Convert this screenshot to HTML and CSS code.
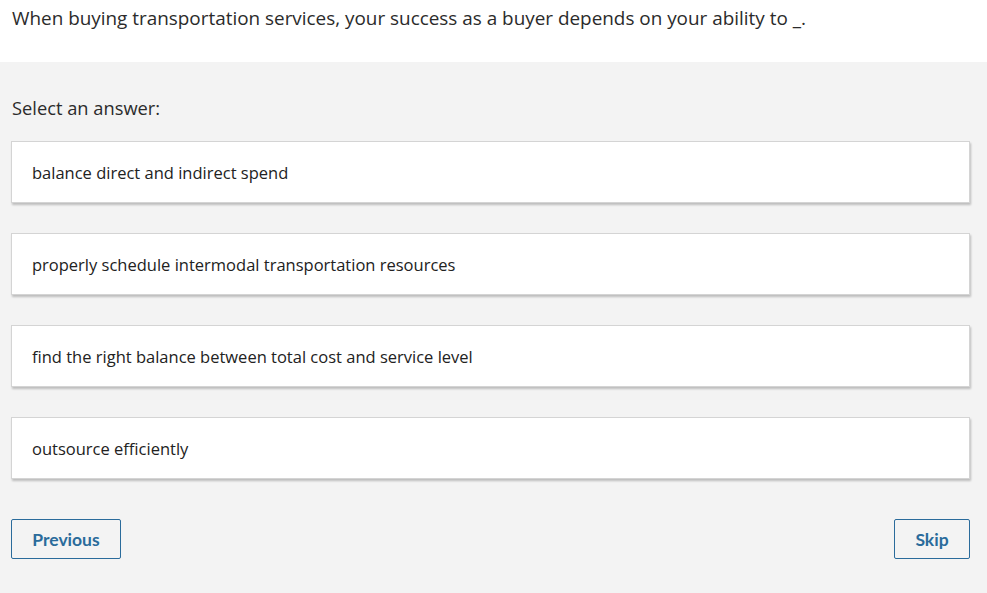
FILE: index.html
```html
<!DOCTYPE html>
<html>
<head>
<meta charset="utf-8">
<link rel="stylesheet" href="styles.css">
</head>
<body>
<div class="question">When buying transportation services, your success as a buyer depends on your ability to _.</div>
<div class="panel">
  <div class="prompt">Select an answer:</div>
  <div class="answers">
    <div class="answer">balance direct and indirect spend</div>
    <div class="answer">properly schedule intermodal transportation resources</div>
    <div class="answer">find the right balance between total cost and service level</div>
    <div class="answer">outsource efficiently</div>
  </div>
  <div class="nav">
    <button class="btn btn-prev">Previous</button>
    <button class="btn btn-skip">Skip</button>
  </div>
</div>
</body>
</html>
```
FILE: styles.css
```css
html, body {
  margin: 0;
  padding: 0;
  background: #f3f3f3;
}
body {
  font-family: "Open Sans", "Noto Sans", sans-serif;
  color: #222;
}
.question {
  background: #fff;
  height: 62px;
  box-sizing: border-box;
  padding: 3px 12px 0;
  font-size: 18.9px;
  line-height: 30px;
  color: #2b2b2b;
}
.panel {
  padding: 32px 17px 0 11px;
}
.prompt {
  font-size: 18.3px;
  line-height: 28px;
  color: #2b2b2b;
  padding-left: 1px;
  margin-bottom: 19px;
}
.answers {
  display: flex;
  flex-direction: column;
  gap: 30px;
}
.answer {
  background: #fff;
  border: 1px solid #d4d4d4;
  box-shadow: 1px 2px 2px rgba(0,0,0,0.22);
  height: 62px;
  box-sizing: border-box;
  padding: 0 20px;
  display: flex;
  align-items: center;
  font-size: 16.5px;
  color: #222;
}
.nav {
  display: flex;
  justify-content: space-between;
  margin-top: 40px;
}
.btn {
  font-family: "Lato", sans-serif;
  font-weight: 700;
  font-size: 17.5px;
  color: #2a6b9b;
  background: transparent;
  border: 1px solid #2a6b9b;
  border-radius: 2px;
  height: 40px;
  padding: 0;
}
.btn-prev { width: 110px; }
.btn-skip { width: 76px; }
```
